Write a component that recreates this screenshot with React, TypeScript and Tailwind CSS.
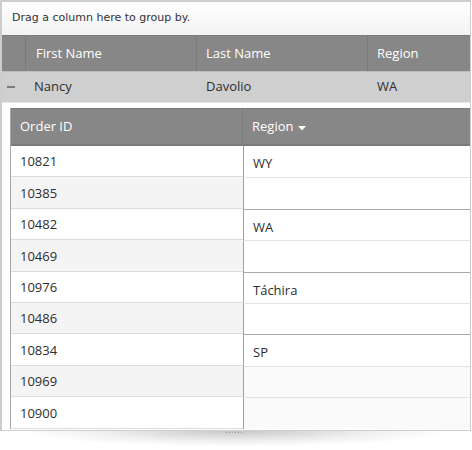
import React from 'react';

type OrderRow = { id: string; region?: string; groupStart: boolean };

const orders: OrderRow[] = [
  { id: '10821', region: 'WY', groupStart: true },
  { id: '10385', groupStart: false },
  { id: '10482', region: 'WA', groupStart: true },
  { id: '10469', groupStart: false },
  { id: '10976', region: 'Táchira', groupStart: true },
  { id: '10486', groupStart: false },
  { id: '10834', region: 'SP', groupStart: true },
  { id: '10969', groupStart: false },
  { id: '10900', groupStart: false },
];

const font = "font-['Open_Sans','Segoe_UI',sans-serif]";

const App: React.FC = () => {
  return (
    <div className={`w-[472px] h-[450px] bg-white ${font} text-[13px] text-[#2e2e2e]`}>
      <div className="w-[471px] h-[431px] border-2 border-r border-b border-[#cdcdcd] overflow-hidden flex flex-col">
        {/* group panel */}
        <div className="h-[33px] shrink-0 flex items-center pl-[10px] bg-gradient-to-b from-white to-[#f3f3f3] font-['DejaVu_Sans',Verdana,sans-serif] text-[11px] text-[#333]">
          Drag a column here to group by.
        </div>

        {/* master header */}
        <div className="h-[36px] shrink-0 grid grid-cols-[24px_171px_171px_1fr] bg-[#878787] text-white border-t border-[#7a7a7a]">
          <div className="border-r border-[#7a7a7a]" />
          <div className="flex items-center pl-[10px] border-r border-[#7a7a7a]">First Name</div>
          <div className="flex items-center pl-[9px] border-r border-[#7a7a7a]">Last Name</div>
          <div className="flex items-center pl-[9px]">Region</div>
        </div>

        {/* master row */}
        <div className="h-[31px] shrink-0 grid grid-cols-[24px_171px_171px_1fr] bg-[#cfcfcf] border-t border-[#bdbdbd]">
          <div className="flex items-center pl-[5px]">
            <span className="block w-[8px] h-[2px] bg-[#7a7a7a]" />
          </div>
          <div className="flex items-center pl-[8px]">Nancy</div>
          <div className="flex items-center pl-[9px]">Davolio</div>
          <div className="flex items-center pl-[9px]">WA</div>
        </div>

        {/* detail */}
        <div className="flex-1 pl-[8px] pt-[5px] border-t border-[#e4e4e4] bg-white">
          <div className="border-l border-[#a8a8a8]">
            <div className="h-[38px] grid grid-cols-[232px_1fr] bg-[#878787] text-white border-t border-b-2 border-[#7a7a7a]">
              <div className="flex items-center pl-[9px] pt-[1px] border-r border-[#7a7a7a]">Order ID</div>
              <div className="flex items-center pl-[9px] pt-[1px] gap-[5px]">
                Region
                <svg width="8" height="5" viewBox="0 0 8 5" className="mt-[2px]">
                  <path d="M0 0h8L4 4.5z" fill="#fff" />
                </svg>
              </div>
            </div>
            {orders.map((o, i) => (
              <div key={o.id} className="grid grid-cols-[232px_1fr] h-[31.4px]">
                <div
                  className={`flex items-center pl-[9px] pt-[2px] border-b border-[#dcdcdc] ${
                    i % 2 === 1 ? 'bg-[#f4f4f4]' : 'bg-white'
                  }`}
                >
                  {o.id}
                </div>
                <div
                  className={`flex items-center pl-[9px] pt-[5px] border-l border-[#a0a0a0] ${
                    o.groupStart && i > 0 ? 'border-t border-t-[#a8a8a8]' : i > 0 ? 'border-t border-t-[#e2e2e2]' : ''
                  } ${i >= 7 ? 'bg-[#fafafa]' : 'bg-white'}`}
                >
                  {o.region}
                </div>
              </div>
            ))}
          </div>
        </div>
      </div>

      {/* resize handle + shadow */}
      <div className="relative h-[19px]">
        <div className="absolute left-[226px] top-[1px] flex gap-[2px]">
          {[0, 1, 2, 3, 4, 5].map((d) => (
            <span key={d} className="block w-[1px] h-[1px] bg-[#9a9a9a]" />
          ))}
        </div>
        <div className="mx-[20px] h-[16px] bg-[radial-gradient(ellipse_at_top,rgba(0,0,0,0.22),rgba(0,0,0,0.06)_45%,transparent_70%)]" />
      </div>
    </div>
  );
};

export default App;
